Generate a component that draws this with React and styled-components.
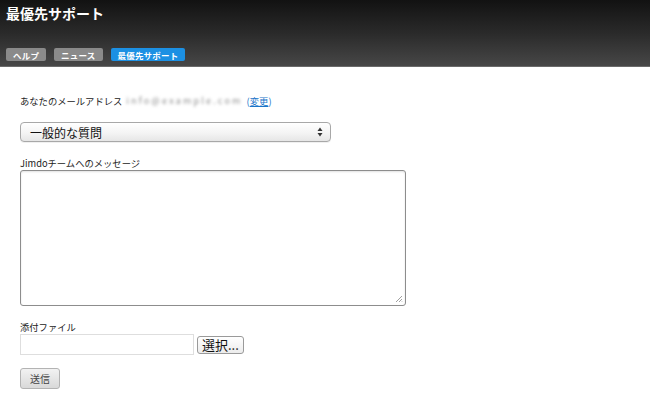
import React from "react";
import styled, { createGlobalStyle } from "styled-components";

const GlobalStyle = createGlobalStyle`
  html, body {
    margin: 0;
    padding: 0;
    background: #fff;
    font-family: "Noto Sans CJK JP", "Noto Sans", "Liberation Sans", sans-serif;
  }
`;

const Header = styled.header`
  height: 67px;
  box-sizing: border-box;
  background: linear-gradient(to bottom, #121212 0%, #2a2a2a 50%, #474747 100%);
  border-bottom: 1px solid #6a6a6a;
  display: flex;
  flex-direction: column;
  justify-content: space-between;
  padding: 3px 6px 5px;
`;

const Title = styled.h1`
  margin: 0;
  color: #fff;
  font-size: 14px;
  font-weight: 700;
  line-height: 20px;
`;

const Tabs = styled.nav`
  display: flex;
  gap: 8px;
`;

const Tab = styled.span`
  display: inline-flex;
  align-items: center;
  justify-content: center;
  height: 13px;
  padding: 0 7px;
  border-radius: 2px;
  background: ${(p) => (p.$active ? "#1c90e3" : "#8a8a8a")};
  color: #fff;
  font-size: 8.5px;
  font-weight: 700;
  letter-spacing: 0.2px;
`;

const Main = styled.main`
  padding: 27px 20px 0;
  color: #222;
`;

const Label = styled.div`
  font-size: 9.3px;
  line-height: 14px;
`;

const EmailLine = styled(Label)`
  display: flex;
  align-items: center;
  gap: 4px;
`;

const Blurred = styled.span`
  color: #8e8e8e;
  filter: blur(1.4px);
  font-size: 9px;
  letter-spacing: 2.2px;
  white-space: nowrap;
`;

const Link = styled.span`
  color: #1a75c9;
  & a {
    color: inherit;
    text-decoration: underline;
  }
`;

const Select = styled.div`
  margin-top: 14px;
  width: 311px;
  height: 20px;
  box-sizing: border-box;
  border: 1px solid #a8a8a8;
  border-radius: 4px;
  background: linear-gradient(to bottom, #ffffff 0%, #f4f4f4 55%, #e6e6e6 100%);
  box-shadow: 0 1px 0 rgba(0, 0, 0, 0.06);
  display: flex;
  align-items: center;
  justify-content: space-between;
  padding: 0 7px 0 9px;
  font-size: 12px;
  color: #111;
`;

const Arrows = styled.svg`
  width: 6px;
  height: 10px;
`;

const MessageLabel = styled(Label)`
  margin-top: 14px;
`;

const TextArea = styled.div`
  position: relative;
  width: 386px;
  height: 136px;
  box-sizing: border-box;
  border: 1px solid #8d8d8d;
  border-radius: 3px;
  background: #fff;
  box-shadow: inset 0 1px 2px rgba(0, 0, 0, 0.12);
`;

const Grip = styled.svg`
  position: absolute;
  right: 2px;
  bottom: 2px;
  width: 8px;
  height: 8px;
`;

const FileLabel = styled(Label)`
  margin-top: 14px;
`;

const FileRow = styled.div`
  display: flex;
  align-items: center;
  gap: 3px;
`;

const FileBox = styled.div`
  width: 174px;
  height: 21px;
  box-sizing: border-box;
  border: 1px solid #dedede;
  background: #fff;
`;

const PickButton = styled.div`
  height: 18px;
  box-sizing: border-box;
  padding: 0 4px;
  border: 1px solid #9a9a9a;
  border-radius: 3px;
  background: linear-gradient(to bottom, #ffffff, #ececec);
  font-size: 13px;
  line-height: 16px;
  color: #111;
`;

const SendButton = styled.div`
  margin-top: 13px;
  width: 40px;
  height: 21px;
  box-sizing: border-box;
  border: 1px solid #b3b3b3;
  border-radius: 3px;
  background: linear-gradient(to bottom, #f2f2f2, #d9d9d9);
  display: flex;
  align-items: center;
  justify-content: center;
  font-size: 10px;
  color: #444;
`;

export default function App() {
  return (
    <>
      <GlobalStyle />
      <Header>
        <Title>最優先サポート</Title>
        <Tabs>
          <Tab>ヘルプ</Tab>
          <Tab>ニュース</Tab>
          <Tab $active>最優先サポート</Tab>
        </Tabs>
      </Header>
      <Main>
        <EmailLine>
          あなたのメールアドレス
          <Blurred>info@example.com</Blurred>
          <Link>(<a href="#">変更</a>)</Link>
        </EmailLine>
        <Select>
          <span>一般的な質問</span>
          <Arrows viewBox="0 0 6 10">
            <path d="M3 0.5 L5.5 4 H0.5 Z" fill="#333" />
            <path d="M3 9.5 L5.5 6 H0.5 Z" fill="#333" />
          </Arrows>
        </Select>
        <MessageLabel>Jimdoチームへのメッセージ</MessageLabel>
        <TextArea>
          <Grip viewBox="0 0 8 8">
            <path d="M1 7 L7 1 M4 7 L7 4 M6.5 7 L7 6.5" stroke="#888" strokeWidth="0.8" />
          </Grip>
        </TextArea>
        <FileLabel>添付ファイル</FileLabel>
        <FileRow>
          <FileBox />
          <PickButton>選択...</PickButton>
        </FileRow>
        <SendButton>送信</SendButton>
      </Main>
    </>
  );
}
